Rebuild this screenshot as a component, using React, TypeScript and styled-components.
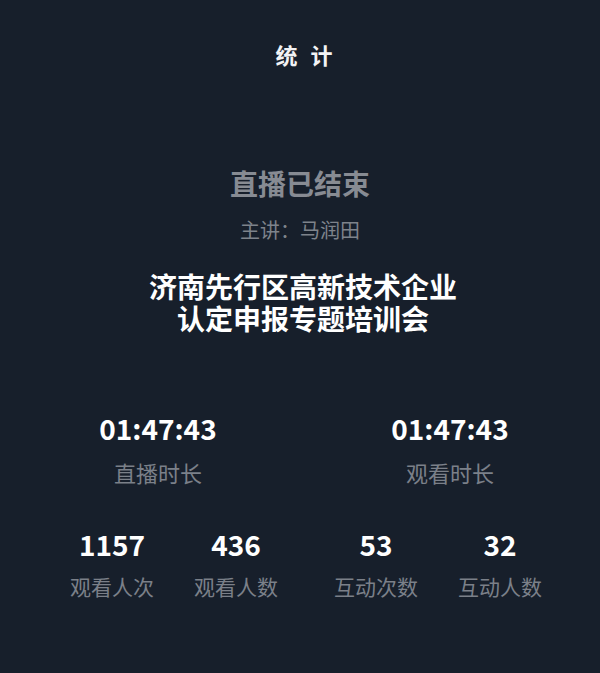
import React from "react";
import styled, { createGlobalStyle } from "styled-components";

const GlobalStyle = createGlobalStyle`
  html, body {
    margin: 0;
    padding: 0;
    background: #171f2b;
  }
  body {
    font-family: "Noto Sans CJK SC", "Noto Sans", sans-serif;
  }
`;

const Page = styled.div`
  width: 600px;
  height: 673px;
  background: #171f2b;
  display: flex;
  flex-direction: column;
  align-items: center;
  overflow: hidden;
`;

const Header = styled.h1`
  margin: 37px 0 0;
  height: 34px;
  line-height: 34px;
  font-size: 22px;
  font-weight: 700;
  color: #f2f3f5;
  letter-spacing: 13px;
  padding-left: 21px;
`;

const Status = styled.div`
  margin-top: 92px;
  font-size: 28px;
  line-height: 40px;
  font-weight: 700;
  color: #878b93;
`;

const Speaker = styled.div`
  margin-top: 13px;
  font-size: 20px;
  line-height: 28px;
  color: #7e838b;
`;

const Title = styled.h2`
  margin: 26px 0 0 6px;
  font-size: 28px;
  line-height: 32px;
  font-weight: 700;
  color: #ffffff;
  text-align: center;
`;

const StatsRow = styled.div<{ $cols: number }>`
  align-self: stretch;
  display: grid;
  grid-template-columns: ${({ $cols }) =>
    $cols === 2 ? "200px 200px" : "124px 124px 124px 124px"};
  column-gap: ${({ $cols }) => ($cols === 2 ? "92px" : "0")};
  padding-left: ${({ $cols }) => ($cols === 2 ? "58px" : "50px")};
  margin-top: ${({ $cols }) => ($cols === 2 ? "74px" : "37px")};

  & > *:nth-child(3),
  & > *:nth-child(4) {
    margin-left: ${({ $cols }) => ($cols === 4 ? "32px" : "0")};
  }
`;

const Stat = styled.div`
  display: flex;
  flex-direction: column;
  align-items: center;
`;

const Value = styled.div`
  font-size: 28px;
  line-height: 40px;
  font-weight: 700;
  color: #ffffff;
`;

const Label = styled.div<{ $big?: boolean }>`
  margin-top: ${({ $big }) => ($big ? "9px" : "7px")};
  font-size: ${({ $big }) => ($big ? "22px" : "21px")};
  line-height: 30px;
  color: #7b8089;
`;

const summary = [
  { value: "01:47:43", label: "直播时长" },
  { value: "01:47:43", label: "观看时长" },
];

const counts = [
  { value: "1157", label: "观看人次" },
  { value: "436", label: "观看人数" },
  { value: "53", label: "互动次数" },
  { value: "32", label: "互动人数" },
];

export default function App() {
  return (
    <Page>
      <GlobalStyle />
      <Header>统计</Header>
      <Status>直播已结束</Status>
      <Speaker>主讲：马润田</Speaker>
      <Title>
        济南先行区高新技术企业
        <br />
        认定申报专题培训会
      </Title>
      <StatsRow $cols={2}>
        {summary.map((s) => (
          <Stat key={s.label}>
            <Value>{s.value}</Value>
            <Label $big>{s.label}</Label>
          </Stat>
        ))}
      </StatsRow>
      <StatsRow $cols={4}>
        {counts.map((s) => (
          <Stat key={s.label}>
            <Value>{s.value}</Value>
            <Label>{s.label}</Label>
          </Stat>
        ))}
      </StatsRow>
    </Page>
  );
}
